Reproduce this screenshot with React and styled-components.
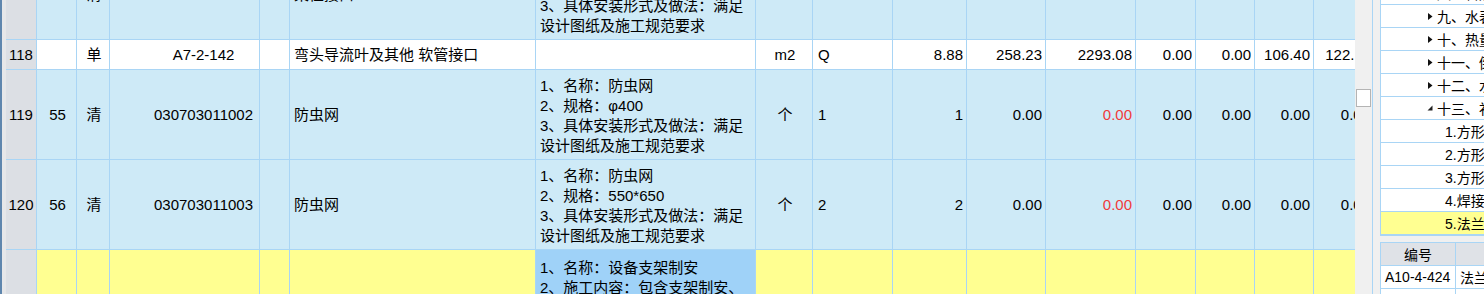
import React from 'react';
import styled, { createGlobalStyle } from 'styled-components';

const LINE = '#a9d5f5';
const COLS = '31px 40px 33px 150px 30px 246px 220px 57px 80px 74px 79px 90px 60px 59px 59px 60px';

const TONES = {
  blue: '#ceeaf7',
  white: '#ffffff',
  yellow: '#ffff91',
};

const GlobalStyle = createGlobalStyle`
  html, body {
    margin: 0;
    padding: 0;
    background: #f0f0f0;
  }
  body {
    font-family: "Liberation Sans", "Noto Sans CJK SC", sans-serif;
    color: #000;
  }
`;

const descCommon = ['3、具体安装形式及做法：满足', '设计图纸及施工规范要求'];

const rows = [
  {
    no: '117', seq: '54', kind: '清', code: '030703019001', name: '柔性接口',
    desc: ['1、名称：柔性接口', '2、材质：帆布', ...descCommon],
    unit: 'm2', expr: '8.88', qty: '8.88', price: '258.23', total: '2293.08',
    a: '0.00', b: '0.00', c: '106.40', d: '122.11', tone: 'blue', h: 90,
  },
  {
    no: '118', seq: '', kind: '单', code: 'A7-2-142', name: '弯头导流叶及其他 软管接口',
    desc: [], unit: 'm2', expr: 'Q', qty: '8.88', price: '258.23', total: '2293.08',
    a: '0.00', b: '0.00', c: '106.40', d: '122.11', tone: 'white', h: 30,
  },
  {
    no: '119', seq: '55', kind: '清', code: '030703011002', name: '防虫网',
    desc: ['1、名称：防虫网', '2、规格：φ400', ...descCommon],
    unit: '个', expr: '1', qty: '1', price: '0.00', total: '0.00', red: true,
    a: '0.00', b: '0.00', c: '0.00', d: '0.00', tone: 'blue', h: 90,
  },
  {
    no: '120', seq: '56', kind: '清', code: '030703011003', name: '防虫网',
    desc: ['1、名称：防虫网', '2、规格：550*650', ...descCommon],
    unit: '个', expr: '2', qty: '2', price: '0.00', total: '0.00', red: true,
    a: '0.00', b: '0.00', c: '0.00', d: '0.00', tone: 'blue', h: 90,
  },
  {
    no: '', seq: '', kind: '', code: '', name: '',
    desc: ['1、名称：设备支架制安', '2、施工内容：包含支架制安、', '除锈、刷油', ...descCommon],
    unit: '', expr: '', qty: '', price: '', total: '',
    a: '', b: '', c: '', d: '', tone: 'yellow', h: 114, selected: true,
  },
];

const tree = [
  { text: '八、管道支架制作安装', level: 1 },
  { text: '九、水表组成、安装', level: 1 },
  { text: '十、热量表组成、安装', level: 1 },
  { text: '十一、倒流防止器组成、安装', level: 1 },
  { text: '十二、水锤消除器安装', level: 1 },
  { text: '十三、补偿器安装', level: 1, open: true },
  { text: '1.方形补偿器制作', level: 2 },
  { text: '2.方形补偿器安装', level: 2 },
  { text: '3.方形补偿器预拉', level: 2 },
  { text: '4.焊接式成品补偿器安装', level: 2 },
  { text: '5.法兰式成品补偿器安装', level: 2, active: true },
];

export default function App() {
  return (
    <>
      <GlobalStyle />
      <Screen>
        <EdgeStripe />
        <EdgeGap />
        <GridArea>
          <Viewport>
            <Sheet>
              {rows.map((r, i) => (
                <Row key={i} $h={r.h} $tone={r.tone}>
                  <HeadCell>{r.no}</HeadCell>
                  <Cell $align="center">{r.seq}</Cell>
                  <Cell $align="center">{r.kind}</Cell>
                  <Cell $align="center" $padLeft={40}>{r.code}</Cell>
                  <Cell />
                  <Cell>{r.name}</Cell>
                  <DescCell $selected={r.selected}>
                    {r.desc.map((line, j) => (
                      <span key={j}>{line}</span>
                    ))}
                  </DescCell>
                  <Cell $align="center">{r.unit}</Cell>
                  <Cell $padLeft={5}>{r.expr}</Cell>
                  <Cell $align="right">{r.qty}</Cell>
                  <Cell $align="right">{r.price}</Cell>
                  <Cell $align="right" $red={r.red}>{r.total}</Cell>
                  <Cell $align="right">{r.a}</Cell>
                  <Cell $align="right">{r.b}</Cell>
                  <Cell $align="right">{r.c}</Cell>
                  <Cell $align="right">{r.d}</Cell>
                </Row>
              ))}
            </Sheet>
          </Viewport>
          <ScrollTrack>
            <ScrollThumb />
          </ScrollTrack>
        </GridArea>
        <Panel>
          <TreeBox>
            {tree.map((t, i) => (
              <TreeRow key={i} $level={t.level} $active={t.active}>
                {t.level === 1 && (
                  t.open ? (
                    <Arrow width="6" height="6" viewBox="0 0 6 6">
                      <path d="M5.5 0.5 L5.5 5.5 L0.5 5.5 Z" fill="#222" />
                    </Arrow>
                  ) : (
                    <Arrow width="6" height="9" viewBox="0 0 6 9">
                      <path d="M1 1 L5.5 4.5 L1 8 Z" fill="#111" />
                    </Arrow>
                  )
                )}
                {t.text}
              </TreeRow>
            ))}
          </TreeBox>
          <ListTable>
            <ListRow $head>
              <ListCell $center>编号</ListCell>
              <ListCell $center>名称</ListCell>
            </ListRow>
            <ListRow>
              <ListCell>A10-4-424</ListCell>
              <ListCell>法兰式成品补偿器安装</ListCell>
            </ListRow>
            <ListRow>
              <ListCell>A10-4-425</ListCell>
              <ListCell>法兰式成品补偿器安装</ListCell>
            </ListRow>
          </ListTable>
        </Panel>
      </Screen>
    </>
  );
}

const Screen = styled.div`
  display: flex;
  width: 1484px;
  height: 294px;
  overflow: hidden;
  background: #f0f0f0;
`;

const EdgeStripe = styled.div`
  flex: none;
  width: 2px;
  background: #5f86ad;
`;

const EdgeGap = styled.div`
  flex: none;
  width: 4px;
  background: #e6e7e9;
`;

const GridArea = styled.div`
  flex: none;
  display: flex;
  width: 1367px;
  box-sizing: border-box;
  border-right: 1px solid ${LINE};
`;

const Viewport = styled.div`
  width: 1349px;
  overflow: hidden;
`;

const Sheet = styled.div`
  margin-top: -50px;
  width: 1368px;
`;

const Row = styled.div`
  display: grid;
  grid-template-columns: ${COLS};
  height: ${p => p.$h}px;
  background: ${p => TONES[p.$tone]};
  font-size: 15px;
  line-height: 20px;
`;

const Cell = styled.div`
  display: flex;
  align-items: center;
  justify-content: ${p =>
    p.$align === 'right' ? 'flex-end' : p.$align === 'center' ? 'center' : 'flex-start'};
  padding: 0 ${p => (p.$align === 'right' ? 3 : 2)}px 0 ${p => p.$padLeft ?? 4}px;
  border-right: 1px solid ${LINE};
  border-bottom: 1px solid ${LINE};
  white-space: nowrap;
  overflow: hidden;
  color: ${p => (p.$red ? '#f03a3a' : '#000')};
  box-sizing: border-box;
  min-width: 0;
`;

const HeadCell = styled(Cell)`
  justify-content: center;
  padding: 0;
  background: #dcdfe4;
`;

const DescCell = styled(Cell)`
  flex-direction: column;
  align-items: flex-start;
  justify-content: center;
  padding-top: 2px;
  background: ${p => (p.$selected ? '#9fd2f8' : 'transparent')};
  span {
    display: block;
  }
`;

const ScrollTrack = styled.div`
  width: 17px;
  flex: none;
  background: #f0f0f0;
  padding: 89px 0 0 1px;
  box-sizing: border-box;
`;

const ScrollThumb = styled.div`
  width: 15px;
  height: 18px;
  box-sizing: border-box;
  border: 1px solid #b4b4b4;
  background: #fff;
`;

const Panel = styled.aside`
  flex: none;
  width: 240px;
  margin-left: 7px;
  display: flex;
  flex-direction: column;
  font-size: 14px;
`;

const TreeBox = styled.div`
  margin-top: -19px;
  background: #fff;
  border: 1px solid ${LINE};
  border-right: none;
`;

const TreeRow = styled.div`
  display: flex;
  align-items: center;
  height: 22px;
  border-bottom: 1px solid ${LINE};
  padding-left: ${p => (p.$level === 1 ? 46 : 64)}px;
  background: ${p => (p.$active ? '#ffff91' : '#fff')};
  white-space: nowrap;
  overflow: hidden;
`;

const Arrow = styled.svg`
  flex: none;
  margin-right: 4px;
`;

const ListTable = styled.div`
  margin-top: 6px;
  background: #fff;
  border-top: 1px solid ${LINE};
  border-left: 1px solid ${LINE};
`;

const ListRow = styled.div`
  display: grid;
  grid-template-columns: 75px 1fr;
  height: 23px;
  background: ${p => (p.$head ? '#dfe2e7' : '#fff')};
`;

const ListCell = styled.div`
  display: flex;
  align-items: center;
  justify-content: ${p => (p.$center ? 'center' : 'flex-start')};
  padding-left: ${p => (p.$center ? 0 : 4)}px;
  border-right: 1px solid ${LINE};
  border-bottom: 1px solid ${LINE};
  white-space: nowrap;
  overflow: hidden;
  font-size: 14px;
`;
